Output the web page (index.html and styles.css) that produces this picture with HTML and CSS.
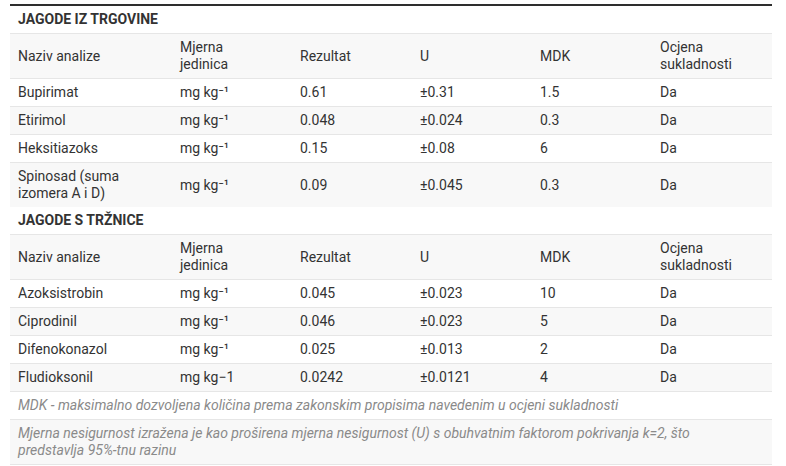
FILE: index.html
```html
<!DOCTYPE html>
<html lang="hr">
<head>
<meta charset="utf-8">
<title>Jagode</title>
<link rel="stylesheet" href="styles.css">
</head>
<body>
<div class="wrap">
<table class="results">
<colgroup>
<col class="c1"><col class="c"><col class="c"><col class="c"><col class="c"><col class="c">
</colgroup>
<tbody>
<tr class="title"><th colspan="6">JAGODE IZ TRGOVINE</th></tr>
<tr><td>Naziv analize</td><td>Mjerna<br>jedinica</td><td>Rezultat</td><td>U</td><td>MDK</td><td>Ocjena<br>sukladnosti</td></tr>
<tr><td>Bupirimat</td><td>mg kg⁻¹</td><td>0.61</td><td>±0.31</td><td>1.5</td><td>Da</td></tr>
<tr><td>Etirimol</td><td>mg kg⁻¹</td><td>0.048</td><td>±0.024</td><td>0.3</td><td>Da</td></tr>
<tr><td>Heksitiazoks</td><td>mg kg⁻¹</td><td>0.15</td><td>±0.08</td><td>6</td><td>Da</td></tr>
<tr><td>Spinosad (suma<br>izomera A i D)</td><td>mg kg⁻¹</td><td>0.09</td><td>±0.045</td><td>0.3</td><td>Da</td></tr>
<tr class="title"><th colspan="6">JAGODE S TRŽNICE</th></tr>
<tr><td>Naziv analize</td><td>Mjerna<br>jedinica</td><td>Rezultat</td><td>U</td><td>MDK</td><td>Ocjena<br>sukladnosti</td></tr>
<tr><td>Azoksistrobin</td><td>mg kg⁻¹</td><td>0.045</td><td>±0.023</td><td>10</td><td>Da</td></tr>
<tr><td>Ciprodinil</td><td>mg kg⁻¹</td><td>0.046</td><td>±0.023</td><td>5</td><td>Da</td></tr>
<tr><td>Difenokonazol</td><td>mg kg⁻¹</td><td>0.025</td><td>±0.013</td><td>2</td><td>Da</td></tr>
<tr><td>Fludioksonil</td><td>mg kg−1</td><td>0.0242</td><td>±0.0121</td><td>4</td><td>Da</td></tr>
<tr class="note"><td colspan="6">MDK - maksimalno dozvoljena količina prema zakonskim propisima navedenim u ocjeni sukladnosti</td></tr>
<tr class="note"><td colspan="6">Mjerna nesigurnost izražena je kao proširena mjerna nesigurnost (U) s obuhvatnim faktorom pokrivanja k=2, što<br>predstavlja 95%-tnu razinu</td></tr>
</tbody>
</table>
</div>
</body>
</html>
```
FILE: styles.css
```css
html, body {
  margin: 0;
  padding: 0;
  background: #fff;
}
.wrap {
  padding: 4px 14px 0 10px;
}
.results {
  width: 762px;
  border-collapse: collapse;
  table-layout: fixed;
  font-family: Roboto, "Liberation Sans", Arial, sans-serif;
  font-size: 14px;
  line-height: 17px;
  color: #333;
  border-top: 2px solid #2e2e2e;
}
.results .c1 { width: 162px; }
.results .c { width: 120px; }
.results td, .results th {
  padding: 5px 8px;
  border-top: 1px solid #e6e6e6;
  text-align: left;
  vertical-align: middle;
  font-weight: 400;
}
.results tr:nth-child(even) {
  background: #f8f8f8;
}
.results tr.title th {
  font-weight: 700;
  border-top: 0;
}
.results tr.note td {
  font-style: italic;
  color: #8a8a8a;
}
.results tr:last-child td {
  border-bottom: 1px solid #e6e6e6;
}
```
